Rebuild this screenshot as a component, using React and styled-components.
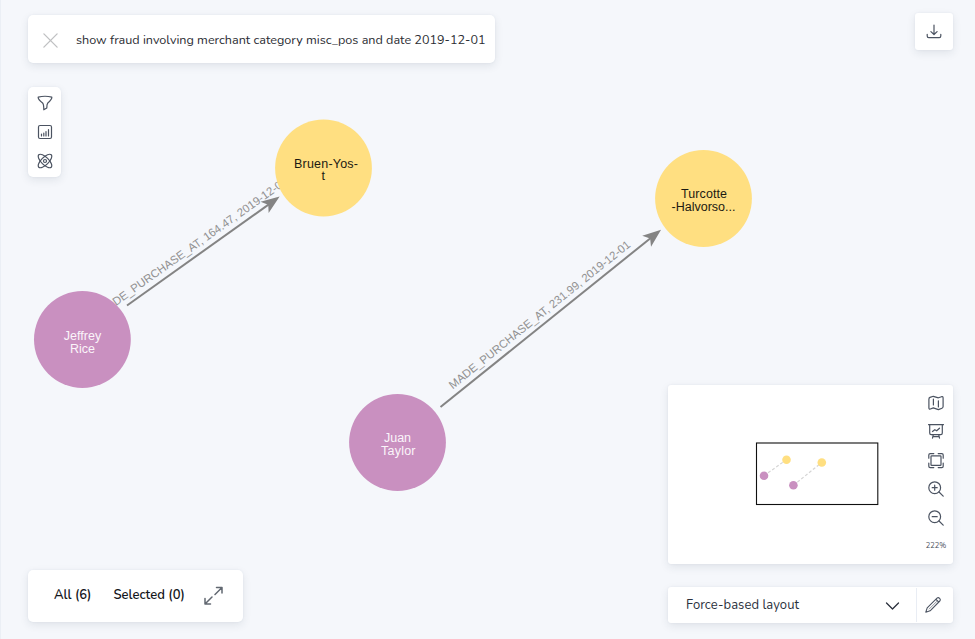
import React from "react";
import styled, { createGlobalStyle } from "styled-components";

const GlobalStyle = createGlobalStyle`
  * { box-sizing: border-box; }
  body {
    margin: 0;
    background: #f5f7fb;
    font-family: Nunito, "Noto Sans", sans-serif;
    color: #2b2d33;
  }
  button { font: inherit; color: inherit; }
`;

const Page = styled.main`
  position: relative;
  width: 975px;
  height: 639px;
  overflow: hidden;
  background: #f5f7fb;
  border-left: 1px solid #ebeff5;
`;

const GraphCanvas = styled.svg`
  position: absolute;
  top: 0;
  left: -1px;
  font-family: "Liberation Sans", Arial, sans-serif;
`;

const Overlay = styled.div`
  position: relative;
  display: flex;
  justify-content: space-between;
  height: 639px;
  padding: 13px 22px 16px 27px;
`;

const Column = styled.div`
  display: flex;
  flex-direction: column;
  align-items: ${(p) => p.$align};
`;

const Panel = styled.div`
  display: flex;
  align-items: center;
  background: #fff;
  border-radius: ${(p) => p.$radius || 3}px;
  box-shadow: 0 3px 9px rgba(40, 55, 80, 0.1), 0 0 2px rgba(60, 90, 130, 0.08);
`;

const SearchBar = styled(Panel)`
  width: 467px;
  height: 48px;
  margin-top: 2px;
  padding: 2px 0 0 13.5px;
`;

const Query = styled.span`
  margin-left: 17.5px;
  font-size: 12.6px;
  line-height: 18px;
  white-space: nowrap;
`;

const Toolbar = styled(Panel)`
  flex-direction: column;
  width: 33px;
  height: 90px;
  margin-top: 24px;
  padding-top: 8px;
  gap: 13px;
`;

const IconButton = styled.button`
  display: flex;
  align-items: center;
  justify-content: center;
  width: ${(p) => p.$size || 16}px;
  height: ${(p) => p.$size || 16}px;
  padding: 0;
  border: 0;
  background: none;
  color: ${(p) => p.$color || "#4b5361"};
`;

const Summary = styled(Panel)`
  width: 215px;
  height: 52px;
  margin-top: auto;
  margin-bottom: 1px;
  padding: 0 19px 1px 26px;
`;

const Tab = styled.button`
  padding: 0 0 1px;
  margin-right: ${(p) => p.$gap}px;
  border: 0;
  background: none;
  color: #14161b;
  font-size: 13px;
  font-weight: 600;
  line-height: 18px;
  white-space: nowrap;
`;

const Download = styled(Panel)`
  width: 38px;
  height: 37px;
  justify-content: center;
`;

const MiniMap = styled(Panel)`
  width: 285px;
  height: 179px;
  margin-top: auto;
  align-items: stretch;
  justify-content: space-between;
`;

const MapTools = styled.div`
  display: flex;
  flex-direction: column;
  align-items: center;
  width: 34px;
  padding-top: 10px;
  gap: 12.8px;
`;

const Zoom = styled.span`
  margin-top: 1px;
  color: #454b57;
  font-size: 7.5px;
  line-height: 12px;
`;

const LayoutBar = styled(Panel)`
  width: 285px;
  height: 36px;
  margin-top: 23px;
`;

const LayoutSelect = styled.button`
  display: flex;
  align-items: center;
  justify-content: space-between;
  width: 249px;
  height: 34px;
  padding: 0 16.5px 0 18px;
  border: 0;
  border-right: 1px solid #e9edf4;
  background: none;
  color: #2b313d;
  font-size: 13px;
  letter-spacing: 0.06px;
`;

const LayoutChevron = styled.span`
  display: flex;
  padding-top: 2px;
`;

const EditSlot = styled.div`
  display: flex;
  flex: 1;
  justify-content: center;
  padding-right: 4px;
`;

const paths = {
  close: <path d="M2 2L16 16M16 2L2 16" />,
  filter: <path d="M1.2 2.2Q8 .3 14.8 2.2Q15.2 4.2 10.8 8Q9.8 9 9.8 13L6.8 14.8Q6.8 9.2 5.6 8Q.8 4.2 1.2 2.2Z" />,
  stats: <><rect x="1.5" y="1.5" width="13" height="13" rx="1.5" /><path d="M4.5 12V10M6.8 12V9M9 12V7.5M11.5 12V5.5" /></>,
  atom: <><ellipse cx="8" cy="8" rx="8.8" ry="3.7" transform="rotate(45 8 8)" /><ellipse cx="8" cy="8" rx="8.8" ry="3.7" transform="rotate(-45 8 8)" /><circle cx="8" cy="8" r="1.5" /></>,
  download: <path d="M8 1V10.3M4.9 7.6L8 10.5L11.1 7.6M1.2 10.3V12Q1.2 13.7 2.8 13.7H13.2Q14.8 13.7 14.8 12V10.3" />,
  map: <path d="M.9 4.2Q.9 2.8 2 2.4L5.3 1.3L10.4 2.8L13.6 1.7Q15.1 1.3 15.1 2.9V11.6Q15.1 12.8 14 13.2L10.4 14.6L5.3 12.9L2.4 14Q.9 14.4 .9 13ZM5.4 4V10M10.4 5.8V12" />,
  board: <><path d="M.5 .7H15.5M1.7 .7V9Q1.7 10.6 3.2 10.6H12.8Q14.3 10.6 14.3 9V.7M4.5 7.5L6.8 5.7L8.7 6.8L11.5 4.2M5.3 10.6L4.5 14.2M10.7 10.6L11.5 14.2M5 12.6H11" /></>,
  fit: <><rect x="3" y="2.8" width="10" height="9.6" rx=".7" /><path d="M5.8 .6H2.2Q.8 .6 .8 2V5.2M10.2 .6H13.8Q15.2 .6 15.2 2V5.2M.8 10V13.2Q.8 14.6 2.2 14.6H5.8M15.2 10V13.2Q15.2 14.6 13.8 14.6H10.2" /></>,
  zoomIn: <><circle cx="6.7" cy="6.7" r="5.9" /><path d="M11 11L15.2 15.2M6.7 4.2V9.2M4.2 6.7H9.2" /></>,
  zoomOut: <><circle cx="6.7" cy="6.7" r="5.9" /><path d="M11 11L15.2 15.2M4.2 6.7H9.2" /></>,
  expand: <path d="M1 12.5V18H6.5M1 18L8 11M12.5 1.5H18V7M18 1.5L11 8.5" />,
  chevron: <path d="M1.5 4L7.5 10L13.5 4" />,
  pencil: <><path d="M.8 15.2L2.2 10.9L12 1.2Q13.3 .1 14.6 1.3Q15.9 2.6 14.8 4L5.1 13.8ZM11 2.3L13.7 5" /><path d="M4.2 12L11.8 4.4" strokeWidth=".6" /></>,
};

const Icon = ({ name, size = 16, box = size, weight = 1.2 }) => (
  <svg width={size} height={size} viewBox={`0 0 ${box} ${box}`} fill="none" stroke="currentColor" strokeWidth={weight} strokeLinejoin="round" strokeLinecap="round" aria-hidden="true">
    {paths[name]}
  </svg>
);

const nodes = [
  { x: 323.5, y: 168, fill: "#ffdf81", ink: "#1c1a12", lines: [["Bruen-Yos-", 294, 168, 64], ["t", 321.5, 180.4, 3.5]] },
  { x: 703.5, y: 198.5, fill: "#ffdf81", ink: "#1c1a12", lines: [["Turcotte", 681, 198.4, 46], ["-Halvorso...", 671.5, 211.4, 64]] },
  { x: 82.4, y: 339.5, fill: "#c990c0", ink: "#fbf5fa", lines: [["Jeffrey", 63.7, 339.5, 37.5], ["Rice", 70, 352.5, 25]] },
  { x: 397.5, y: 442.5, fill: "#c990c0", ink: "#fbf5fa", lines: [["Juan", 384, 442.4, 27], ["Taylor", 381, 454.9, 34.5]] },
];

const edges = [
  { x: 127, y: 305.5, length: 187.5, angle: -35.5, label: "MADE_PURCHASE_AT, 164.47, 2019-12-01", offset: -26.5 },
  { x: 440.5, y: 407, length: 283, angle: -38.8, label: "MADE_PURCHASE_AT, 231.99, 2019-12-01", offset: 20.5 },
];

const Graph = () => (
  <GraphCanvas width="975" height="639">
    {edges.map((e) => (
      <g key={e.label} transform={`translate(${e.x} ${e.y}) rotate(${e.angle})`}>
        <path d={`M0 0H${e.length - 12}`} stroke="#848484" strokeWidth="2" />
        <path d={`M${e.length} 0L${e.length - 18.5} -7L${e.length - 14} 0L${e.length - 18.5} 7Z`} fill="#848484" />
        <text x={e.offset} y="-6" fontSize="11.4" fill="#919191" textLength="229">{e.label}</text>
      </g>
    ))}
    {nodes.map((n) => (
      <g key={n.x}>
        <circle cx={n.x} cy={n.y} r="48.4" fill={n.fill} />
        {n.lines.map(([text, x, y, width]) => (
          <text key={text} x={x} y={y} fontSize="12.5" fill={n.ink} textLength={width}>{text}</text>
        ))}
      </g>
    ))}
  </GraphCanvas>
);

const Overview = () => (
  <svg width="240" height="179" aria-label="Graph overview">
    <path d="M96 90.7L118.5 74.7M125.5 100.3L153.7 77.5" stroke="#d5d5d5" strokeWidth="1.2" strokeDasharray="3 2" />
    <rect x="88.5" y="58" width="121.3" height="61.5" fill="none" stroke="#101010" strokeWidth="1.1" />
    <circle cx="118.5" cy="74.7" r="4.3" fill="#ffdf81" />
    <circle cx="153.8" cy="77.5" r="4.3" fill="#ffdf81" />
    <circle cx="96" cy="90.7" r="4.3" fill="#c990c0" />
    <circle cx="125.4" cy="100.3" r="4.3" fill="#c990c0" />
  </svg>
);

export default function App() {
  return (
    <Page>
      <GlobalStyle />
      <Graph />
      <Overlay>
        <Column $align="flex-start">
          <SearchBar $radius={5}>
            <IconButton $size={17} $color="#bfc0c2" aria-label="Clear"><Icon name="close" size={17} box={18} weight={1.4} /></IconButton>
            <Query>show fraud involving merchant category misc_pos and date 2019-12-01</Query>
          </SearchBar>
          <Toolbar $radius={5}>
            {["filter", "stats", "atom"].map((name) => (
              <IconButton key={name} aria-label={name}><Icon name={name} /></IconButton>
            ))}
          </Toolbar>
          <Summary $radius={5}>
            <Tab $gap={22}>All (6)</Tab>
            <Tab $gap={19.5}>Selected (0)</Tab>
            <IconButton $size={19} $color="#626871" aria-label="Expand"><Icon name="expand" size={19} weight={1.5} /></IconButton>
          </Summary>
        </Column>
        <Column $align="flex-end">
          <Download>
            <IconButton aria-label="Download"><Icon name="download" /></IconButton>
          </Download>
          <MiniMap>
            <Overview />
            <MapTools>
              {["map", "board", "fit", "zoomIn", "zoomOut"].map((name) => (
                <IconButton key={name} aria-label={name}><Icon name={name} /></IconButton>
              ))}
              <Zoom>222%</Zoom>
            </MapTools>
          </MiniMap>
          <LayoutBar>
            <LayoutSelect>
              <span>Force-based layout</span>
              <LayoutChevron><Icon name="chevron" size={15} weight={1.3} /></LayoutChevron>
            </LayoutSelect>
            <EditSlot>
              <IconButton aria-label="Edit layout"><Icon name="pencil" weight={1.1} /></IconButton>
            </EditSlot>
          </LayoutBar>
        </Column>
      </Overlay>
    </Page>
  );
}
